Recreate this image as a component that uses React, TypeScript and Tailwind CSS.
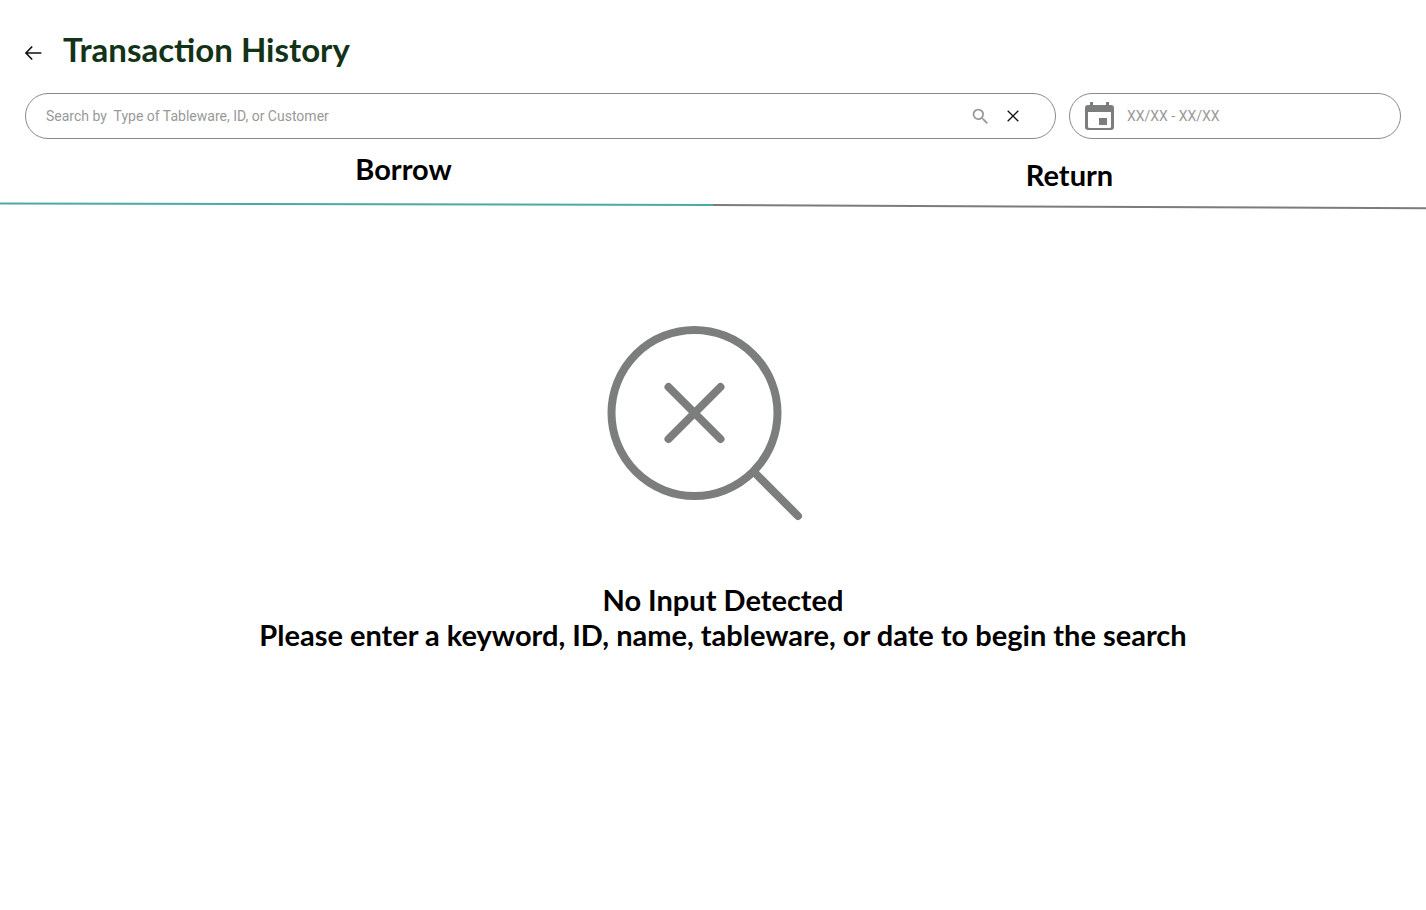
import { useState } from "react";

type Tab = "borrow" | "return";

export default function App() {
  const [tab, setTab] = useState<Tab>("borrow");
  const [query, setQuery] = useState("");
  const [dates, setDates] = useState("");

  return (
    <main className="min-h-screen bg-white font-['Lato',sans-serif] text-black">
      <header className="flex items-center gap-5 px-[25px] pt-7">
        <button type="button" aria-label="Back" className="mt-2 shrink-0">
          <BackIcon />
        </button>
        <h1 className="text-[33px] leading-[42px] font-bold text-[#123318]">Transaction History</h1>
      </header>

      <form
        className="mt-[23px] flex gap-[13px] px-[25px] font-['Roboto',sans-serif]"
        onSubmit={(event) => event.preventDefault()}
      >
        <div className="flex h-[46px] grow items-center rounded-full border border-[#8a8a8a] pr-8 pl-5">
          <input
            type="text"
            aria-label="Search transactions"
            placeholder="Search by  Type of Tableware, ID, or Customer"
            value={query}
            onChange={(event) => setQuery(event.target.value)}
            className="min-w-0 grow text-sm outline-none placeholder:text-[#999999]"
          />
          <button type="submit" aria-label="Search" className="shrink-0">
            <SearchIcon />
          </button>
          <button
            type="button"
            aria-label="Clear search"
            className="ml-3 shrink-0"
            onClick={() => setQuery("")}
          >
            <ClearIcon />
          </button>
        </div>

        <label className="flex h-[46px] w-[332px] shrink-0 items-center gap-[13px] rounded-full border border-[#8a8a8a] px-[15px]">
          <CalendarIcon />
          <input
            type="text"
            aria-label="Date range"
            placeholder="XX/XX - XX/XX"
            value={dates}
            onChange={(event) => setDates(event.target.value)}
            className="min-w-0 grow text-sm outline-none placeholder:text-[#999999]"
          />
        </label>
      </form>

      <div role="tablist" className="grid grid-cols-2 text-[29px] leading-9 font-bold">
        <button
          type="button"
          role="tab"
          aria-selected={tab === "borrow"}
          onClick={() => setTab("borrow")}
          className="flex flex-col"
        >
          <span className="w-full pt-3 pb-[15px] pl-[94px]">Borrow</span>
          <TabLine active={tab === "borrow"} from={1.5} to={3} />
        </button>
        <button
          type="button"
          role="tab"
          aria-selected={tab === "return"}
          onClick={() => setTab("return")}
          className="flex flex-col"
        >
          <span className="w-full pt-[18px] pb-[9px]">Return</span>
          <TabLine active={tab === "return"} from={3} to={6.3} />
        </button>
      </div>

      <section className="flex flex-col items-center pt-[115px] text-center">
        <NoInputIcon />
        <p className="mt-[61px] pl-5 text-[29px] leading-[35px] font-bold">
          No Input Detected
          <br />
          Please enter a keyword, ID, name, tableware, or date to begin the search
        </p>
      </section>
    </main>
  );
}

/** Tab underline; the two halves join into one slightly sloping rule. */
function TabLine({ active, from, to }: { active: boolean; from: number; to: number }) {
  return (
    <svg
      aria-hidden="true"
      viewBox="0 0 100 8"
      preserveAspectRatio="none"
      className={active ? "h-2 w-full text-[#4caaa5]" : "h-2 w-full text-[#7c7c7c]"}
    >
      <line
        x1="0"
        y1={from}
        x2="100"
        y2={to}
        stroke="currentColor"
        strokeWidth="2"
        vectorEffect="non-scaling-stroke"
      />
    </svg>
  );
}

function BackIcon() {
  return (
    <svg
      width="18"
      height="16"
      viewBox="0 0 18 16"
      fill="none"
      stroke="#111"
      strokeWidth="1.7"
      strokeLinecap="round"
      strokeLinejoin="round"
    >
      <path d="M15.7 8H.9M6.7 2L.9 8L6.7 14" />
    </svg>
  );
}

function SearchIcon() {
  return (
    <svg width="21" height="21" viewBox="0 0 24 24" fill="#999999">
      <path d="M15.5 14h-.79l-.28-.27A6.47 6.47 0 0 0 16 9.5 6.5 6.5 0 1 0 9.5 16c1.61 0 3.09-.59 4.23-1.57l.27.28v.79l5 4.99L20.49 19l-4.99-5zm-6 0C7.01 14 5 11.99 5 9.5S7.01 5 9.5 5 14 7.01 14 9.5 11.99 14 9.5 14z" />
    </svg>
  );
}

function ClearIcon() {
  return (
    <svg width="20" height="20" viewBox="0 0 20 20" fill="none" stroke="#111" strokeWidth="1.3">
      <path d="M4.7 4.7L15.3 15.3M15.3 4.7L4.7 15.3" />
    </svg>
  );
}

function CalendarIcon() {
  return (
    <svg width="29" height="30" viewBox="0 0 29 30" fill="#7c7e7d" className="shrink-0">
      <path
        fillRule="evenodd"
        d="M5 1h3v3h13V1h3v3h2a3 3 0 0 1 3 3v19a3 3 0 0 1-3 3H3a3 3 0 0 1-3-3V7a3 3 0 0 1 3-3h2zM3 11v14.5a1.5 1.5 0 0 0 1.5 1.5h20a1.5 1.5 0 0 0 1.5-1.5V11z"
      />
      <path d="M14 17h8v7h-8z" />
    </svg>
  );
}

function NoInputIcon() {
  return (
    <svg
      aria-hidden="true"
      width="234"
      height="196"
      viewBox="0 0 234 196"
      fill="none"
      stroke="#7c7e7d"
      strokeWidth="8"
      strokeLinecap="round"
    >
      <circle cx="98.5" cy="88" r="83" />
      <path d="M72.5 62L124.5 114M124.5 62L72.5 114M159 148L202 191" />
    </svg>
  );
}
